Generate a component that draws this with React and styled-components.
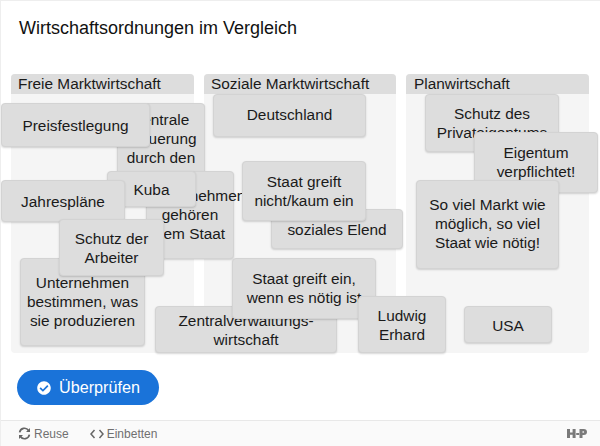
import React from "react";
import styled, { createGlobalStyle } from "styled-components";
import { FaCheckCircle } from "react-icons/fa";

const GlobalStyle = createGlobalStyle`
  html, body {
    margin: 0;
    padding: 0;
    background: #fff;
    font-family: "Liberation Sans", Arial, sans-serif;
  }
`;

const Frame = styled.div`
  width: 600px;
  height: 446px;
  box-sizing: border-box;
  border-top: 1px solid #eeeeee;
  border-left: 1px solid #eeeeee;
  display: flex;
  flex-direction: column;
  overflow: hidden;
`;

const Title = styled.h1`
  margin: 0;
  height: 73px;
  padding: 17px 0 0 18px;
  box-sizing: border-box;
  font-size: 18px;
  line-height: 21px;
  font-weight: 400;
  color: #111;
`;

const Board = styled.div`
  position: relative;
  height: 279px;
  display: flex;
  gap: 10px;
  padding-left: 10px;
`;

const Zone = styled.section`
  width: ${(p) => p.$width}px;
  height: 100%;
  background: #f5f5f5;
  border-radius: 4px;
`;

const ZoneHeading = styled.div`
  height: 20px;
  padding-left: ${(p) => p.$indent}px;
  background: #dddddd;
  border-radius: 4px 4px 0 0;
  font-size: 15.4px;
  line-height: 20px;
  color: #1a1a1a;
  white-space: nowrap;
`;

const Card = styled.div`
  position: absolute;
  left: ${(p) => p.$x - 1}px;
  top: ${(p) => p.$y - 74}px;
  width: ${(p) => p.$w}px;
  height: ${(p) => p.$h}px;
  box-sizing: border-box;
  padding: ${(p) => p.$pad}px 5px 0;
  background: #dddddd;
  border: 1px solid #d3d3d3;
  border-radius: 4px;
  box-shadow: 0 1px 2px rgba(0, 0, 0, 0.16);
  font-size: 15.4px;
  line-height: 19.2px;
  color: #1a1a1a;
  text-align: center;
`;

const Actions = styled.div`
  height: 67px;
  padding: 17px 0 0 16px;
  box-sizing: border-box;
`;

const CheckButton = styled.button`
  display: flex;
  align-items: center;
  gap: 8px;
  width: 142px;
  height: 35px;
  padding: 0 0 0 20px;
  box-sizing: border-box;
  border: 0;
  border-radius: 18px;
  background: #1a73d9;
  color: #fff;
  font-family: inherit;
  font-size: 16.2px;
`;

const Footer = styled.footer`
  flex: 1;
  display: flex;
  align-items: center;
  padding: 0 13px 0 17px;
  background: #fafafa;
  border-top: 1px solid #e8e8e8;
  font-size: 12px;
  color: #707070;
`;

const FooterLink = styled.span`
  display: inline-flex;
  align-items: center;
  gap: 3px;
  margin-right: 21px;
`;

const Logo = styled.svg`
  margin-left: auto;
`;

const zones = [
  { name: "Freie Marktwirtschaft", width: 183, indent: 7 },
  { name: "Soziale Marktwirtschaft", width: 192, indent: 7 },
  { name: "Planwirtschaft", width: 183, indent: 8 },
];

// draggables in stacking order, page coordinates
const cards = [
  { text: "Zentrale Steuerung durch den Staat", x: 117, y: 103, w: 88, h: 89, pad: 6 },
  { text: "Preisfestlegung", x: 1, y: 103, w: 149, h: 44, pad: 12 },
  { text: "Unternehmen gehören dem Staat", x: 146, y: 171, w: 88, h: 88, pad: 14 },
  { text: "Kuba", x: 107, y: 171, w: 89, h: 36, pad: 8 },
  { text: "Jahrespläne", x: 1, y: 180, w: 124, h: 42, pad: 11 },
  { text: "Unternehmen bestimmen, was sie produzieren", x: 20, y: 258, w: 125, h: 88, pad: 14 },
  { text: "Schutz der Arbeiter", x: 59, y: 219, w: 105, h: 57, pad: 9 },
  { text: "Deutschland", x: 213, y: 94, w: 153, h: 43, pad: 10 },
  { text: "soziales Elend", x: 271, y: 209, w: 132, h: 40, pad: 10 },
  { text: "Staat greift nicht/kaum ein", x: 242, y: 161, w: 124, h: 60, pad: 10 },
  { text: "Zentralverwaltungs-wirtschaft", x: 155, y: 306, w: 182, h: 47, pad: 4 },
  { text: "Staat greift ein, wenn es nötig ist", x: 232, y: 258, w: 144, h: 61, pad: 10 },
  { text: "Ludwig Erhard", x: 358, y: 296, w: 88, h: 57, pad: 9 },
  { text: "USA", x: 464, y: 306, w: 88, h: 37, pad: 9 },
  { text: "Schutz des Privateigentums", x: 425, y: 94, w: 134, h: 58, pad: 9 },
  { text: "Eigentum verpflichtet!", x: 474, y: 132, w: 124, h: 61, pad: 10 },
  { text: "So viel Markt wie möglich, so viel Staat wie nötig!", x: 416, y: 180, w: 143, h: 89, pad: 14 },
];

function ReuseIcon() {
  return (
    <svg width="13" height="13" viewBox="0 0 13 13" fill="none" stroke="#666" strokeWidth="1.7">
      <path d="M1.6 5.4A5 5 0 0 1 10.6 3.4" />
      <path d="M11.4 7.6A5 5 0 0 1 2.4 9.6" />
      <path d="M12 1v4H8z" fill="#666" stroke="none" />
      <path d="M1 12V8h4z" fill="#666" stroke="none" />
    </svg>
  );
}

function EmbedIcon() {
  return (
    <svg width="14" height="10" viewBox="0 0 14 10" fill="none" stroke="#666" strokeWidth="1.5">
      <path d="M4.500 1 1 5l3.500 4" />
      <path d="M9.500 1 13 5l-3.500 4" />
    </svg>
  );
}

function H5PLogo() {
  return (
    <Logo width="20" height="11" viewBox="0 0 20 11" fill="#7a7a7a">
      <path d="M0 1h3v3.4h2.6V1h3v9h-3V6.800H3V10H0z" />
      <path d="M9.200 5h3v2h-3z" />
      <path d="M12.500 1h4.300c2 0 3.200 1.100 3.200 2.900s-1.200 3-3.200 3h-1.300V10h-3zm3 2.300v1.400h.8c.6 0 .9-.3.9-.7s-.3-.7-.9-.7z" />
    </Logo>
  );
}

export default function App() {
  return (
    <>
      <GlobalStyle />
      <Frame>
        <Title>Wirtschaftsordnungen im Vergleich</Title>
        <Board>
          {zones.map((zone) => (
            <Zone key={zone.name} $width={zone.width}>
              <ZoneHeading $indent={zone.indent}>{zone.name}</ZoneHeading>
            </Zone>
          ))}
          {cards.map((card) => (
            <Card key={card.text} $x={card.x} $y={card.y} $w={card.w} $h={card.h} $pad={card.pad}>
              {card.text}
            </Card>
          ))}
        </Board>
        <Actions>
          <CheckButton>
            <FaCheckCircle size={14} />
            Überprüfen
          </CheckButton>
        </Actions>
        <Footer>
          <FooterLink>
            <ReuseIcon />
            Reuse
          </FooterLink>
          <FooterLink>
            <EmbedIcon />
            Einbetten
          </FooterLink>
          <H5PLogo />
        </Footer>
      </Frame>
    </>
  );
}
